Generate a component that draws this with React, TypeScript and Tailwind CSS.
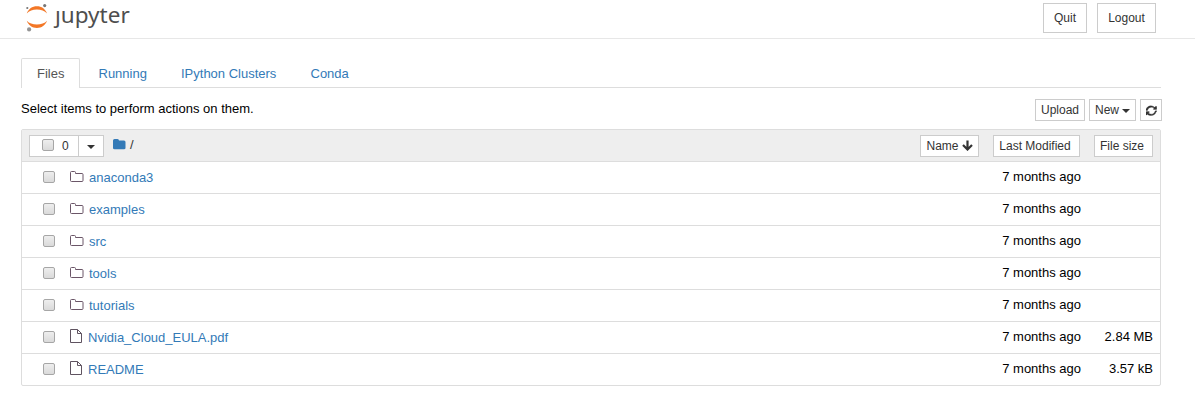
import React from 'react';

type Item = { name: string; kind: 'folder' | 'file'; size: string };

const items: Item[] = [
  { name: 'anaconda3', kind: 'folder', size: '' },
  { name: 'examples', kind: 'folder', size: '' },
  { name: 'src', kind: 'folder', size: '' },
  { name: 'tools', kind: 'folder', size: '' },
  { name: 'tutorials', kind: 'folder', size: '' },
  { name: 'Nvidia_Cloud_EULA.pdf', kind: 'file', size: '2.84 MB' },
  { name: 'README', kind: 'file', size: '3.57 kB' },
];

const btn =
  'flex h-[22px] items-center justify-center whitespace-nowrap border border-[#ccc] bg-white text-xs text-[#333]';

function Logo() {
  return (
    <svg width="24" height="32" viewBox="0 0 24 32" className="shrink-0">
      <path d="M1.800 13.400C3.500 8.800 7.200 6.200 11.900 6.200S20.300 8.800 22 13.400C19.800 10.900 16 9.600 11.900 9.600S4 10.900 1.800 13.400Z" fill="#f37726" />
      <path d="M1.800 20.800C3.500 25.400 7.200 28 11.900 28S20.300 25.400 22 20.800C19.800 23.300 16 24.600 11.900 24.600S4 23.300 1.800 20.800Z" fill="#f37726" />
      <circle cx="19.700" cy="5.600" r="1.600" fill="#767677" />
      <circle cx="2.300" cy="8" r="1.100" fill="#767677" />
      <circle cx="4.100" cy="29.400" r="2.100" fill="#949494" />
    </svg>
  );
}

function FolderOutline() {
  return (
    <svg width="14" height="12" viewBox="0 0 14 12" fill="none" stroke="#6b5668" strokeWidth="1" className="block">
      <path d="M.5 9.500v-8q0-1 1-1h3q1 0 1 1v1h6.500q1 0 1 1v6q0 1-1 1h-10.500q-1 0-1-1z" />
    </svg>
  );
}

function FileOutline() {
  return (
    <svg width="13" height="14" viewBox="0 0 13 14" fill="none" stroke="#5f5360" strokeWidth="1" className="block">
      <path d="M.5 .5h7l4 4v9h-11zM7.500 .5v4h4" />
    </svg>
  );
}

function Caret() {
  return (
    <svg width="8" height="4" viewBox="0 0 8 4" className="mt-px">
      <path d="M0 0h8L4 4z" fill="#333" />
    </svg>
  );
}

function Checkbox() {
  return (
    <span className="mb-0.5 block size-3 shrink-0 rounded-[2px] border border-[#a6a6a6] bg-linear-to-b from-[#eee] to-[#dadada]" />
  );
}

export default function App() {
  return (
    <div className="h-[412px] w-[1195px] overflow-hidden bg-white font-['Liberation_Sans',Arial,sans-serif] text-[13px] leading-5 text-black">
      <header className="flex h-[39px] border-b border-[#e7e7e7] pl-[25px]">
        <Logo />
        <div className="ml-[6px] font-['Noto_Sans',sans-serif] text-[22.5px] leading-[30px] text-[#4e4e4e]">ȷupyter</div>
        <div className="ml-auto mr-[39px] mt-[3px] flex gap-[10px]">
          <button className="h-[30px] w-11 border border-[#ccc] text-xs text-[#333]">Quit</button>
          <button className="h-[30px] w-[59px] border border-[#ccc] text-xs text-[#333]">Logout</button>
        </div>
      </header>

      <nav className="ml-[21px] mt-[19px] flex h-[30px] w-[1140px] border-b border-[#ddd] text-[#337ab7]">
        <a className="h-[30px] w-[59px] rounded-t-[2px] border border-b-0 border-[#ddd] bg-white pl-[15px] pt-[5px] text-[#555]">Files</a>
        <a className="ml-[18.500px] w-[82.500px] pt-[6px]">Running</a>
        <a className="w-[129.500px] pt-[6px]">IPython Clusters</a>
        <a className="pt-[6px]">Conda</a>
      </nav>

      <div className="ml-[21px] mt-[11px] flex h-[30px] w-[1141px] items-start">
        <span>Select items to perform actions on them.</span>
        <div className="ml-auto flex gap-1">
          <button className={btn + ' w-[50px]'}>Upload</button>
          <button className={btn + ' w-[47px] gap-[3px]'}>New <Caret /></button>
          <button className={btn + ' w-[22px]'}>
            <svg width="11" height="11" viewBox="-13 0 531 512" fill="#333" stroke="#333" strokeWidth="16">
              <path d="M481 300q0 3-1 4-21 89-89 144t-160 55q-49 0-95-18.500t-81-53L18 468Q13 474 5 474t-13-5.500T-13 456V328q0-8 5.500-13t12.500-5h128q8 0 13 5t5 13-5 13l-39 39q27 25 61 38.500t71 13.500q51 0 95-24.500T404 340q5-8 25-55 4-11 14-11h55q7 0 12 6t-1 20zM505 56v128q0 8-5 13t-13 5H359q-8 0-13-5t-5-13 5-13l40-39Q327 94 256 94q-51 0-95 24.500T90 186q-5 8-25 55-4 11-14 11H-6q-7 0-12-6t-6-12v-4q21-89 89-144t160-55q49 0 96 19t83 53l39-39q5-5 13-5t13 5 5 13z" />
            </svg>
          </button>
        </div>
      </div>

      <main className="ml-[21px] w-[1140px] rounded-[2px] border border-[#ddd]">
        <div className="flex h-[31px] bg-[#eee] pl-[7px] pt-[5px]">
          <div className="flex h-[22px] w-[75px] border border-[#ccc] bg-white text-xs text-[#333]">
            <div className="flex w-[49px] items-center border-r border-[#ccc] pl-3">
              <Checkbox />
              <span className="ml-2">0</span>
            </div>
            <div className="flex flex-1 items-center justify-center pt-px"><Caret /></div>
          </div>
          <svg width="13" height="11" viewBox="0 0 13 11" className="ml-[9px] mt-[4px]">
            <path d="M0 9V1.500Q0 0 1.500 0h3Q6 0 6 1.500H11Q12.500 1.500 12.500 3v6q0 1.300-1.500 1.300H1.500Q0 10.300 0 9z" fill="#337ab7" />
          </svg>
          <span className="ml-[4px] text-[#333]">/</span>
          <div className="ml-auto mr-[7px] flex">
            <button className={btn + ' w-[59px] gap-[3px]'}>
              Name
              <svg width="11" height="11" viewBox="0 0 11 11" fill="none" stroke="#333" strokeWidth="2.200" className="-mt-px">
                <path d="M5.500 .5v8.500M1 5l4.500 4.500L10 5" />
              </svg>
            </button>
            <button className={btn + ' ml-[14px] w-[87px] pr-[3px]'}>Last Modified</button>
            <button className={btn + ' ml-[14px] w-[59px] pr-[3px]'}>File size</button>
          </div>
        </div>
        {items.map((item) => (
          <div key={item.name} className="flex h-8 items-center border-t border-[#ddd] pl-[21px] pr-[7px]">
            <Checkbox />
            <span className={item.kind === 'folder' ? 'ml-[15px] w-[19px] pb-0.5' : 'ml-[15px] w-[18px] pb-1'}>
              {item.kind === 'folder' ? <FolderOutline /> : <FileOutline />}
            </span>
            <a className="pt-px text-[#337ab7]">{item.name}</a>
            <span className="ml-auto pb-0.5">7 months ago</span>
            <span className="w-[72px] pb-0.5 text-right">{item.size}</span>
          </div>
        ))}
      </main>
    </div>
  );
}
